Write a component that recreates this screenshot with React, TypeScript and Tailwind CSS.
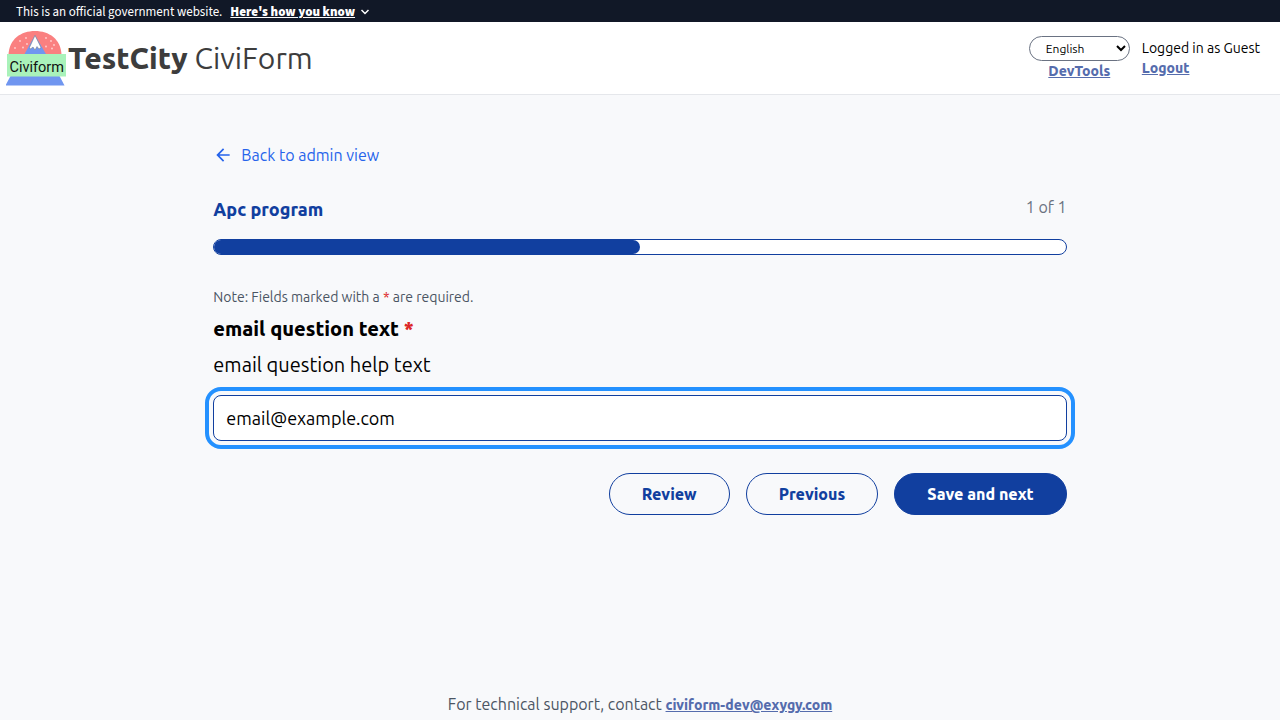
import { useState } from "react";
import type { ReactNode } from "react";

function Logo() {
  return (
    <svg viewBox="0 0 62 58" className="h-[58px] w-[62px] shrink-0" role="img" aria-label="Civiform logo">
      <path d="M2.500 26C3 10 15 2 29 2S55 10 55.500 26Z" fill="#fa8080" />
      <path d="M29 6 40.500 26H18Z" fill="#7096f0" />
      <path d="M29 6.500 35 18.500l-2 1.500-2-2.500-2 3.500-2-3-2.500 2-1-1.500Z" fill="#fff" stroke="#777" strokeWidth=".5" />
      <g fill="#ffd0d0">
        <circle cx="20" cy="9" r=".9" />
        <circle cx="14" cy="12" r=".9" />
        <circle cx="21" cy="15" r=".9" />
        <circle cx="9" cy="19" r=".9" />
        <circle cx="17" cy="18.500" r=".9" />
        <circle cx="40" cy="9" r=".9" />
        <circle cx="40" cy="17.500" r=".9" />
        <circle cx="45" cy="12" r=".9" />
        <circle cx="48" cy="16" r=".9" />
        <circle cx="46" cy="19.500" r=".9" />
      </g>
      <path d="M4.500 47h49l5 9.500H-.5Z" fill="#7096f0" />
      <path d="M1 25h59v22.500H1Z" fill="#a9f2ba" />
      <text x="3.500" y="42.500" fontSize="14.500" fontFamily="Roboto, sans-serif" fill="#111">
        Civiform
      </text>
    </svg>
  );
}

function OutlineButton({ children }: { children: ReactNode }) {
  return (
    <button
      type="button"
      className="h-[42px] rounded-full border border-[#113f9f] px-8 font-extrabold text-[#113f9f]"
    >
      {children}
    </button>
  );
}

export default function App() {
  const [email, setEmail] = useState("email@example.com");

  return (
    <div className="flex min-h-screen flex-col bg-[#f8f9fb] font-[Ubuntu,'Noto_Sans',sans-serif] text-base leading-6 font-[450] text-black">
      <div className="flex h-[22px] items-center bg-[#111827] px-4 pt-0.5 font-['Source_Sans_Pro','Source_Sans_3','Noto_Sans_CJK_SC',sans-serif] text-[13px] font-normal text-white">
        <p>This is an official government website.</p>
        <button type="button" className="ml-2 flex items-center gap-1 font-black">
          <span className="underline">Here's how you know</span>
          <svg viewBox="0 0 12 8" className="h-2 w-3" fill="none" stroke="currentColor" strokeWidth="1.5">
            <path d="m2.500 2 3.500 3.500L9.500 2" />
          </svg>
        </button>
      </div>

      <header className="flex items-center justify-between border-b border-gray-200 bg-white pr-5 pl-1.5">
        <a href="#home" className="flex h-[72px] items-center text-3xl text-[#3d3d3d]">
          <Logo />
          <span>
            <span className="font-extrabold">TestCity</span> CiviForm
          </span>
        </a>
        <div className="flex gap-3 text-sm">
          <div className="flex flex-col items-center">
            <select
              aria-label="Language"
              className="h-[25px] w-[101px] rounded-full border border-gray-500 bg-white px-3 text-xs"
            >
              <option>English</option>
            </select>
            <a href="#dev" className="font-extrabold text-[#556cad] underline">
              DevTools
            </a>
          </div>
          <div className="flex flex-col pt-0.5">
            <span>Logged in as Guest</span>
            <a href="#logout" className="font-extrabold text-[#556cad] underline">
              Logout
            </a>
          </div>
        </div>
      </header>

      <main className="mx-auto w-2/3 flex-1 pt-12">
        <a href="#admin" className="flex w-fit items-center gap-2 text-[#2563eb]">
          <svg viewBox="0 0 24 24" className="size-5" fill="currentColor">
            <path d="M20 11H7.830l5.590-5.590L12 4l-8 8 8 8 1.410-1.410L7.830 13H20v-2z" />
          </svg>
          Back to admin view
        </a>

        <div className="mt-7 flex items-start justify-between">
          <h1 className="text-lg font-extrabold text-[#113f9f]">Apc program</h1>
          <span className="text-[#6b7280]">1 of 1</span>
        </div>
        <div className="mt-4 h-4 overflow-hidden rounded-full border border-[#113f9f] bg-white">
          <div className="h-full w-1/2 rounded-r-full bg-[#113f9f]" />
        </div>

        <form className="mt-8">
          <p className="text-sm text-[#4b5563]">
            Note: Fields marked with a <span className="text-[#dc2626]">*</span> are required.
          </p>
          <label htmlFor="email" className="mt-2 block text-xl font-extrabold">
            email question text <span className="text-[#dc2626]">*</span>
          </label>
          <p id="email-help" className="mt-2 text-xl">
            email question help text
          </p>
          <input
            id="email"
            type="email"
            aria-describedby="email-help"
            value={email}
            onChange={(event) => setEmail(event.target.value)}
            className="mt-4 block h-[46px] w-full rounded-lg border border-[#113f9f] bg-white px-3 text-lg outline-4 outline-offset-4 outline-[#2491ff]"
          />
          <div className="mt-8 flex justify-end gap-4">
            <OutlineButton>Review</OutlineButton>
            <OutlineButton>Previous</OutlineButton>
            <button type="submit" className="h-[42px] rounded-full border border-[#113f9f] bg-[#113f9f] px-8 font-extrabold text-white">
              Save and next
            </button>
          </div>
        </form>
      </main>

      <footer className="pb-1 text-center text-[#4b5563]">
        For technical support, contact{" "}
        <a href="mailto:civiform-dev@exygy.com" className="text-sm font-extrabold text-[#556cad] underline">
          civiform-dev@exygy.com
        </a>
      </footer>
    </div>
  );
}
